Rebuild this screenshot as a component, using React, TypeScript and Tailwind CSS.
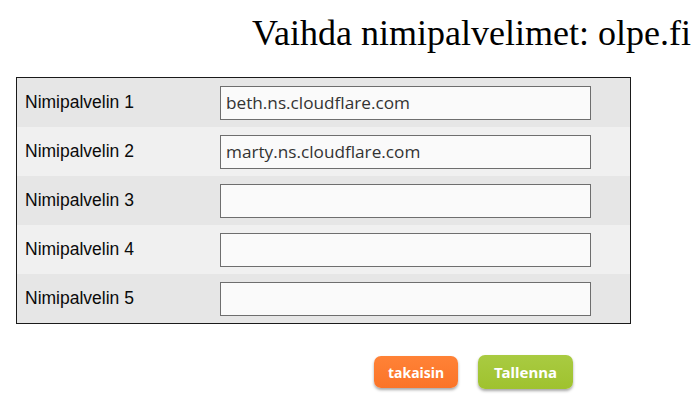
import React from "react";

const servers = [
  "beth.ns.cloudflare.com",
  "marty.ns.cloudflare.com",
  "",
  "",
  "",
];

export default function App() {
  return (
    <div className="w-[696px] h-[403px] bg-white overflow-hidden">
      <div className="pt-[13px] pr-[5px] flex justify-end">
        <h1 className="text-[36px] leading-[41px] text-black font-['Liberation_Serif',serif] whitespace-nowrap">
          Vaihda nimipalvelimet: olpe.fi
        </h1>
      </div>

      <div className="ml-[16px] mt-[23px] w-[615px] border border-[#1a1a1a]">
        {servers.map((value, i) => (
          <div
            key={i}
            className={`h-[49px] flex items-center ${i % 2 === 0 ? "bg-[#e6e6e6]" : "bg-[#f0f0f0]"}`}
          >
            <div className="w-[203px] pl-[8px] text-[17.5px] text-[#0a0a0a] font-['Liberation_Sans',sans-serif]">
              Nimipalvelin {i + 1}
            </div>
            <input
              type="text"
              defaultValue={value}
              className="w-[371px] h-[34px] border border-[#6e6e6e] bg-[#fafafa] px-[5px] text-[17.2px] text-[#333] font-['Open_Sans',sans-serif] outline-none"
            />
          </div>
        ))}
      </div>

      <div className="mt-[31px] pl-[374px] flex items-center gap-[20px]">
        <button className="w-[84px] h-[32px] rounded-[7px] bg-gradient-to-b from-[#ff8236] to-[#fb7428] text-white text-[14px] font-bold font-['Noto_Sans',sans-serif] shadow-[0_2px_3px_rgba(0,0,0,0.35)]">
          takaisin
        </button>
        <button className="w-[95px] h-[34px] rounded-[7px] bg-gradient-to-b from-[#a9cb41] to-[#9fc22e] text-white text-[15px] font-bold font-['Noto_Sans',sans-serif] shadow-[0_2px_3px_rgba(0,0,0,0.35)]">
          Tallenna
        </button>
      </div>
    </div>
  );
}
